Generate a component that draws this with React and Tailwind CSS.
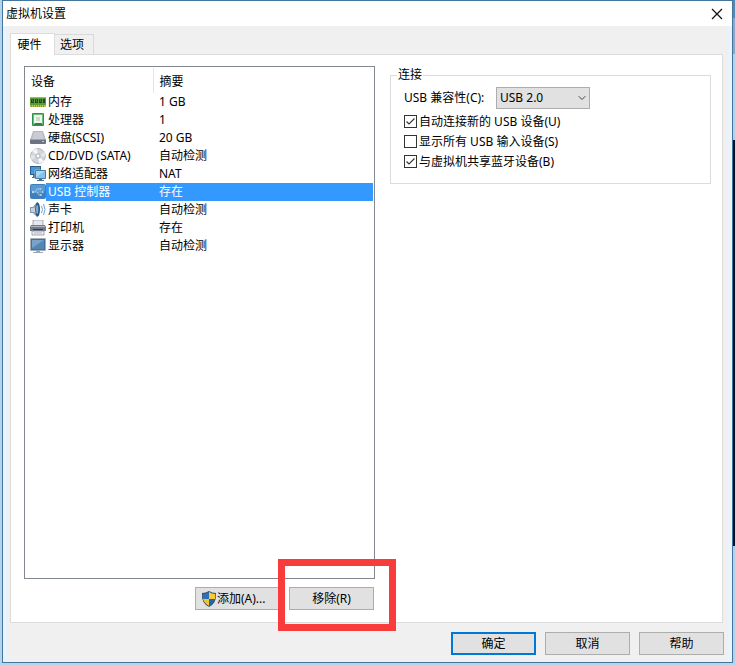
import React, { useState } from "react";
import { ChevronDown } from "lucide-react";

function MemoryIcon() {
  return (
    <svg viewBox="0 0 16 16" className="h-4 w-4">
      <rect x="0" y="3" width="16" height="8" fill="#5c9c38" />
      <path d="M0 3h16v1H0z" fill="#8cc06a" />
      <path d="M1 5h3v4H1zM5 5h3v4H5zM9 5h3v4H9zM13 5h2v4h-2z" fill="#1f4a20" />
      <path d="M2 5l1 3M6 5l1 3M10 5l1 3" stroke="#6c9a50" strokeWidth=".7" />
      <path d="M0 11h16v2H0z" fill="#b9c552" />
      <path d="M1 12h1M3 12h1M5 12h1M7 12h1M9 12h1M11 12h1M13 12h1" stroke="#36742a" />
    </svg>
  );
}

function ProcessorIcon() {
  return (
    <svg viewBox="0 0 16 16" className="h-4 w-4">
      <rect x="2" y="1" width="12" height="13" rx="1" fill="#2f9149" />
      <rect x="3" y="2" width="10" height="11" fill="#6cc07a" />
      <rect x="4" y="3" width="8" height="8" fill="#edf7ee" />
      <rect x="6" y="5" width="4" height="4" fill="#cbddce" />
      <path d="M3 13l3-2h5l2 2z" fill="#2a8246" />
    </svg>
  );
}

function DiskIcon() {
  return (
    <svg viewBox="0 0 16 16" className="h-4 w-4">
      <path d="M3 1h10l3 9H0z" fill="#b4b9c1" />
      <path d="M4 2h8l2 7H2z" fill="#c9cdd3" />
      <path d="M0 9h16v4q0 1-1 1H1q-1 0-1-1z" fill="#6c7483" />
      <path d="M0 9h16v1H0z" fill="#9da4af" />
      <path d="M12 11h2v1h-2z" fill="#a8e0a0" />
    </svg>
  );
}

function DiscIcon() {
  return (
    <svg viewBox="0 0 16 16" className="h-4 w-4">
      <circle cx="8" cy="8" r="7.4" fill="#d2d6db" stroke="#a4aab2" strokeWidth=".8" />
      <path d="M8 8L2 3a7 7 0 0 1 5-2zM8 8l6 5a7 7 0 0 1-5 2z" fill="#f6f7f9" />
      <path d="M8 8L1 7v5zM8 8l7 1V4z" fill="#e3e6ea" />
      <circle cx="8" cy="8" r="2.7" fill="#b7bdc5" />
      <circle cx="8" cy="8" r="1.4" fill="#fff" />
    </svg>
  );
}

function NetworkIcon() {
  return (
    <svg viewBox="0 0 16 16" className="h-4 w-4">
      <rect x="0" y="0" width="11" height="9" fill="#2c5d8c" />
      <rect x="1" y="1" width="9" height="7" fill="#4a94cf" />
      <path d="M3 9h3v3H2v-1h1z" fill="#496d8c" />
      <rect x="5" y="4" width="11" height="9" fill="#235681" stroke="#dcebf5" strokeWidth=".5" />
      <rect x="6" y="5" width="9" height="7" fill="#83c4ee" />
      <path d="M6 5h9l-9 6z" fill="#a8daf6" />
      <path d="M9 13h3v1h2v1H7v-1h2z" fill="#496d8c" />
    </svg>
  );
}

function UsbIcon() {
  return (
    <svg viewBox="0 0 16 16" className="h-4 w-4">
      <rect x="0" y="0" width="16" height="15" rx="2" fill="#3f7fbd" />
      <path d="M1 2q0-1 1-1h12q1 0 1 1v5H1z" fill="#5b98cf" />
      <path d="M3 8h10M5 8l2-3h3M7 8l2 3h2" fill="none" stroke="#a9cdec" strokeWidth=".9" />
      <circle cx="3" cy="8" r="1.2" fill="#b8d7f1" />
      <circle cx="10.5" cy="5" r=".9" fill="#a9cdec" />
      <path d="M12 6.500l2.200 1.500-2.200 1.500zM10 10h1.800v1.800H10z" fill="#a9cdec" />
    </svg>
  );
}

function SoundIcon() {
  return (
    <svg viewBox="0 0 16 16" className="h-4 w-4">
      <path d="M0 5h3l4-5q2 0 2 7.500T7 15l-4-4H0z" fill="#8598aa" />
      <path d="M1 6h3l3-4v11l-3-3H1z" fill="#c3d0dc" />
      <ellipse cx="7.6" cy="7.5" rx="2.4" ry="6.9" fill="#2b5684" />
      <ellipse cx="7.2" cy="7.5" rx="1.1" ry="4.4" fill="#80afd6" />
      <path d="M11.500 4q2 3.500 0 7M13.500 2q3 5.500 0 11" fill="none" stroke="#6ba4d4" strokeWidth="1" />
    </svg>
  );
}

function PrinterIcon() {
  return (
    <svg viewBox="0 0 16 16" className="h-4 w-4">
      <path d="M3 0h10v6H3z" fill="#e6e8ee" stroke="#858a99" strokeWidth=".7" />
      <path d="M1 5h14l1 2v4H0V7z" fill="#747a8c" />
      <path d="M1 6h14v1H1z" fill="#b0b4c0" />
      <path d="M3 9h10v1H3z" fill="#32374a" />
      <path d="M2 11h12v4H2z" fill="#eef0f5" stroke="#7f8595" strokeWidth=".7" />
      <path d="M4 13h8" stroke="#aeb3bf" />
    </svg>
  );
}

function DisplayIcon() {
  return (
    <svg viewBox="0 0 16 16" className="h-4 w-4">
      <rect x="0" y="0" width="16" height="13" rx="1" fill="#a3afbb" />
      <rect x="1" y="1" width="14" height="11" fill="#43709c" />
      <path d="M2 2h12v9H2z" fill="#5486b8" />
      <path d="M2 2h12L2 10z" fill="#7ba2c8" />
      <path d="M6 13h4v1h3v1H3v-1h3z" fill="#9ba7b3" />
    </svg>
  );
}

function ShieldIcon() {
  return (
    <svg viewBox="0 0 16 16" className="h-4 w-4 shrink-0">
      <path d="M8 0q3 2 7 2 1 10-7 14Q0 12 1 2q4 0 7-2z" fill="#35526e" />
      <path d="M8 1v7H2q-.5-2-.2-5Q5 3 8 1z" fill="#2e70b8" />
      <path d="M8 1q3 2 6.200 2 .3 3-.2 5H8z" fill="#f6cb36" />
      <path d="M2 8h6v7Q3 12 2 8z" fill="#f1c232" />
      <path d="M8 8h6q-1 4-6 7z" fill="#2864a8" />
    </svg>
  );
}

const devices = [
  { name: "内存", summary: "1 GB", Icon: MemoryIcon },
  { name: "处理器", summary: "1", Icon: ProcessorIcon },
  { name: "硬盘(SCSI)", summary: "20 GB", Icon: DiskIcon },
  { name: "CD/DVD (SATA)", summary: "自动检测", Icon: DiscIcon },
  { name: "网络适配器", summary: "NAT", Icon: NetworkIcon },
  { name: "USB 控制器", summary: "存在", Icon: UsbIcon },
  { name: "声卡", summary: "自动检测", Icon: SoundIcon },
  { name: "打印机", summary: "存在", Icon: PrinterIcon },
  { name: "显示器", summary: "自动检测", Icon: DisplayIcon },
];

function CheckOption({ label, defaultChecked }) {
  return (
    <label className="flex h-5 items-center gap-[2px]">
      <span className="grid h-[13px] w-[13px] shrink-0">
        <input
          type="checkbox"
          defaultChecked={defaultChecked}
          className="peer col-start-1 row-start-1 h-[13px] w-[13px] appearance-none border border-[#333] bg-white"
        />
        <svg viewBox="0 0 13 13" className="pointer-events-none invisible col-start-1 row-start-1 h-[13px] w-[13px] peer-checked:visible">
          <path d="M2.500 6.500l2.500 2.500 5.500-5.500" fill="none" stroke="#333" strokeWidth="1.100" />
        </svg>
      </span>
      <span className="pt-[2px]">{label}</span>
    </label>
  );
}

function DialogButton({ children, primary }) {
  return (
    <button
      className={
        primary
          ? "h-[23px] w-[85px] border-2 border-[#0078d7] bg-[#e1e1e1] text-center"
          : "h-[23px] w-[85px] border border-[#adadad] bg-[#e1e1e1] text-center"
      }
    >
      {children}
    </button>
  );
}

export default function App() {
  const [selected, setSelected] = useState(5);

  return (
    <div className="flex min-h-screen bg-[#b9d3e8] pb-[2px] font-['Noto_Sans','Noto_Sans_CJK_SC',sans-serif] text-[12px] leading-[18px] text-black">
      <div className="w-[2px] shrink-0 bg-[#b4d3ec]" />

      <div className="flex min-w-0 flex-1 flex-col border border-[#44759f] bg-[#f0f0f0]">
        <header className="flex h-[25px] shrink-0 items-center justify-between bg-white pr-[9px] pl-[3px]">
          <h1>虚拟机设置</h1>
          <button aria-label="关闭">
            <svg viewBox="0 0 12 12" className="h-3 w-3">
              <path d="M1 1l10 10M11 1L1 11" stroke="#111" strokeWidth="1.200" />
            </svg>
          </button>
        </header>

        <div className="flex flex-1 flex-col border-x-4 border-[#eaf3f9] pt-[7px]">
          <div role="tablist" className="flex items-end pl-[3px]">
            <button role="tab" aria-selected="true" className="z-10 -mb-px h-[22px] w-[45px] border border-b-0 border-[#dcdcdc] bg-white pr-[6px]">
              硬件
            </button>
            <button role="tab" aria-selected="false" className="h-5 w-[39px] border border-b-0 border-l-0 border-[#d9d9d9] pt-px pr-1">
              选项
            </button>
          </div>

          <main className="mr-[5px] ml-[3px] flex flex-1 gap-[15px] border border-[#dcdcdc] bg-white pt-[11px] pr-[11px] pb-3 pl-[13px]">
            <section className="flex w-[351px] shrink-0 flex-col">
              <div className="flex-1 border border-[#828790] p-px">
                <table className="w-full table-fixed border-collapse">
                  <colgroup>
                    <col className="w-[127px]" />
                    <col />
                  </colgroup>
                  <thead>
                    <tr className="h-[25px] text-left">
                      <th className="border-r border-[#e5e5e5] p-0 pt-[2px] pl-[5px] font-normal">设备</th>
                      <th className="p-0 pt-[2px] pl-[6px] font-normal">摘要</th>
                    </tr>
                  </thead>
                  <tbody>
                    {devices.map(({ name, summary, Icon }, i) => (
                      <tr key={name} onClick={() => setSelected(i)} className="h-[18px]">
                        <td className="p-0 pl-1">
                          <div className="flex h-[18px] items-center">
                            <Icon />
                            <span
                              className={
                                i === selected
                                  ? "flex-1 bg-[#3399ff] pl-[2px] whitespace-nowrap text-white"
                                  : "flex-1 pl-[2px] whitespace-nowrap"
                              }
                            >
                              {name}
                            </span>
                          </div>
                        </td>
                        <td className={i === selected ? "bg-[#3399ff] p-0 pl-[6px] text-white" : "p-0 pl-[6px]"}>
                          {summary}
                        </td>
                      </tr>
                    ))}
                  </tbody>
                </table>
              </div>

              <div className="mt-2 flex justify-end gap-[9px] pr-px">
                <button className="flex h-[23px] w-[85px] items-center border border-[#adadad] bg-[#e1e1e1] pl-[5px] whitespace-nowrap">
                  <ShieldIcon />
                  添加(A)...
                </button>
                <div className="relative">
                  <DialogButton>移除(R)</DialogButton>
                  {/* highlight frame around the remove button */}
                  <div className="pointer-events-none absolute -top-7 -right-[22px] -bottom-[21px] -left-[11px] border-[7px] border-[#f83b3b]" />
                </div>
              </div>
            </section>

            <section className="min-w-0 flex-1">
              <fieldset className="border border-[#dcdcdc] pb-3 pl-[13px]">
                <legend className="-ml-[7px] px-px">连接</legend>
                <div className="mt-[3px] flex h-[22px] items-center gap-2">
                  <label htmlFor="usb-version" className="w-[84px] whitespace-nowrap">USB 兼容性(C):</label>
                  <div className="grid h-[22px] w-[94px] items-center">
                    <select
                      id="usb-version"
                      defaultValue="USB 2.0"
                      className="col-start-1 row-start-1 h-[22px] w-full appearance-none border border-[#adadad] bg-[#e1e1e1] pl-[3px]"
                    >
                      <option>USB 1.1</option>
                      <option>USB 2.0</option>
                      <option>USB 3.0</option>
                    </select>
                    <ChevronDown className="pointer-events-none col-start-1 row-start-1 mr-[2px] h-3 w-3 justify-self-end text-[#444]" strokeWidth={2} />
                  </div>
                </div>
                <div className="mt-[2px]">
                  <CheckOption label="自动连接新的 USB 设备(U)" defaultChecked />
                  <CheckOption label="显示所有 USB 输入设备(S)" />
                  <CheckOption label="与虚拟机共享蓝牙设备(B)" defaultChecked />
                </div>
              </fieldset>
            </section>
          </main>

          <footer className="flex justify-end gap-[9px] pt-[9px] pr-1 pb-[7px]">
            <DialogButton primary>确定</DialogButton>
            <DialogButton>取消</DialogButton>
            <DialogButton>帮助</DialogButton>
          </footer>
        </div>
      </div>

      {/* desktop showing past the window edge */}
      <div className="flex w-[2px] shrink-0 flex-col">
        <div className="h-[18px] bg-[#5289b8]" />
        <div className="h-9 bg-[#8fa5c8]" />
        <div className="h-[86px] bg-[#b4d0e6]" />
        <div className="h-[406px] bg-[#04101f]" />
        <div className="flex-1 bg-[#b4d0e6]" />
      </div>
    </div>
  );
}
